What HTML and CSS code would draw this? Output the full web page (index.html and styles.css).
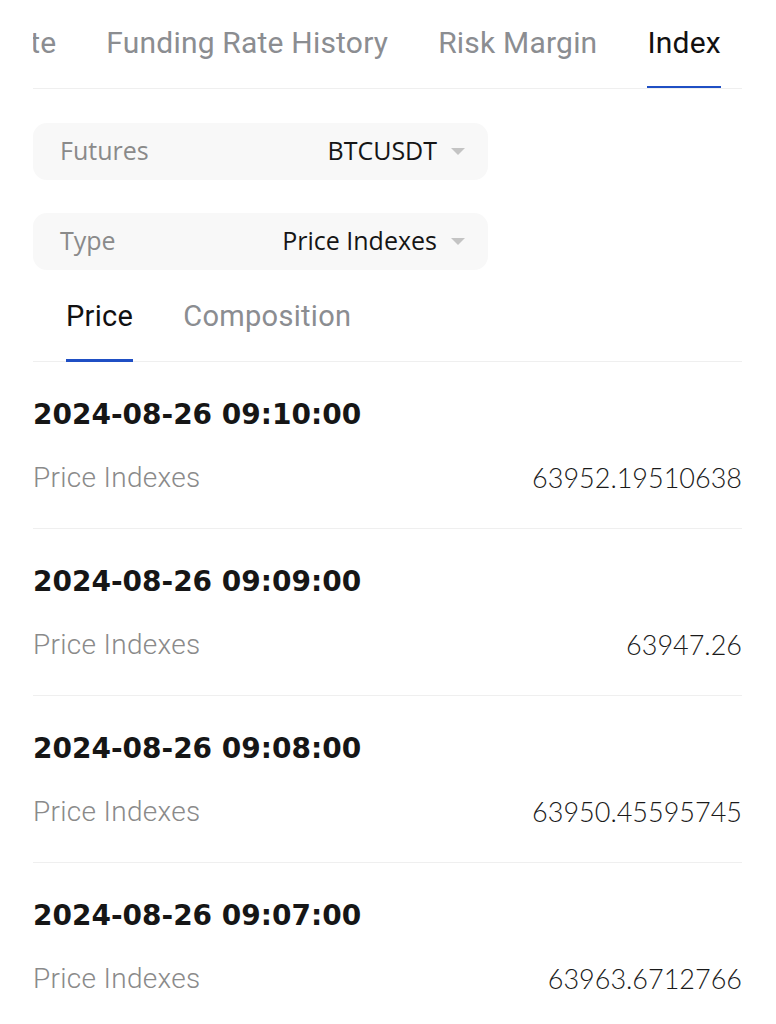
FILE: index.html
```html
<!DOCTYPE html>
<html lang="en">
<head>
<meta charset="utf-8">
<title>Index</title>
<link rel="stylesheet" href="styles.css">
</head>
<body>
<div class="page">
  <nav class="tabs">
    <div class="tabs-track">
      <span class="tab tab-clipped">Rate</span>
      <span class="tab">Funding Rate History</span>
      <span class="tab">Risk Margin</span>
      <span class="tab active">Index</span>
    </div>
  </nav>

  <div class="filters">
    <div class="select">
      <span class="select-label">Futures</span>
      <span class="select-value">BTCUSDT<span class="caret"></span></span>
    </div>
    <div class="select">
      <span class="select-label">Type</span>
      <span class="select-value">Price Indexes<span class="caret"></span></span>
    </div>
  </div>

  <nav class="subtabs">
    <span class="subtab active">Price</span>
    <span class="subtab">Composition</span>
  </nav>

  <ul class="list">
    <li class="row">
      <div class="row-date">2024-08-26 09:10:00</div>
      <div class="row-line"><span class="row-label">Price Indexes</span><span class="row-value">63952.19510638</span></div>
    </li>
    <li class="row">
      <div class="row-date">2024-08-26 09:09:00</div>
      <div class="row-line"><span class="row-label">Price Indexes</span><span class="row-value">63947.26</span></div>
    </li>
    <li class="row">
      <div class="row-date">2024-08-26 09:08:00</div>
      <div class="row-line"><span class="row-label">Price Indexes</span><span class="row-value">63950.45595745</span></div>
    </li>
    <li class="row">
      <div class="row-date">2024-08-26 09:07:00</div>
      <div class="row-line"><span class="row-label">Price Indexes</span><span class="row-value">63963.6712766</span></div>
    </li>
  </ul>
</div>
</body>
</html>
```

FILE: styles.css
```css
* { box-sizing: border-box; }
html, body { margin: 0; padding: 0; background: #ffffff; }
body { font-family: Roboto, "Liberation Sans", sans-serif; color: #121212; }

.page {
  width: 776px;
  height: 1024px;
  overflow: hidden;
  padding: 0 34px 0 33px;
}

/* top tabs */
.tabs {
  overflow: hidden;
  border-bottom: 1px solid #efefef;
}
.tabs-track {
  display: flex;
  gap: 50px;
  white-space: nowrap;
}
.tab {
  font-size: 30px;
  letter-spacing: 0.2px;
  line-height: 40px;
  padding: 23px 0 23px;
  margin-bottom: -1px;
  border-bottom: 3px solid transparent;
  color: #8b8d91;
}
.tab-clipped { margin-left: -38px; }
.tab.active {
  color: #111111;
  border-bottom-color: #1f4fc4;
}

/* filter selects */
.filters {
  display: flex;
  flex-direction: column;
  gap: 33px;
  margin-top: 34px;
  width: 455px;
}
.select {
  height: 57px;
  border-radius: 14px;
  background: #f8f8f8;
  display: flex;
  align-items: center;
  justify-content: space-between;
  padding: 0 23px 3px 27px;
  font-family: "Open Sans", "Noto Sans", sans-serif;
  font-size: 25px;
}
.select-label { color: #8a8a8a; }
.select-value {
  color: #151515;
  display: flex;
  align-items: center;
  gap: 14px;
}
.caret {
  width: 0;
  height: 0;
  border-left: 7px solid transparent;
  border-right: 7px solid transparent;
  border-top: 7px solid #c4c4c4;
  margin-top: 2px;
}

/* sub tabs */
.subtabs {
  display: flex;
  gap: 50px;
  margin-top: 26px;
  padding-left: 33px;
  border-bottom: 1px solid #efefef;
}
.subtab {
  font-size: 29px;
  letter-spacing: 0.3px;
  line-height: 40px;
  padding: 0 0 23px;
  margin-bottom: -1px;
  border-bottom: 3px solid transparent;
  color: #8b8d91;
}
.subtab.active {
  color: #111111;
  border-bottom-color: #1f4fc4;
}

/* list */
.list {
  list-style: none;
  margin: 0;
  padding: 0;
}
.row {
  padding: 33px 0 30px;
  border-bottom: 1px solid #efefef;
  display: flex;
  flex-direction: column;
  gap: 23px;
}
.row-date {
  font-family: "DejaVu Sans", sans-serif;
  font-weight: 700;
  font-size: 28px;
  line-height: 40px;
  color: #161616;
}
.row-line {
  display: flex;
  justify-content: space-between;
  align-items: center;
  line-height: 40px;
}
.row-label {
  font-family: Roboto, "Liberation Sans", sans-serif;
  font-weight: 300;
  font-size: 28px;
  letter-spacing: 0.3px;
  color: #8a8a8a;
}
.row-value {
  font-family: Lato, "Liberation Sans", sans-serif;
  font-weight: 300;
  font-size: 27px;
  color: #1a1a1a;
}
```
